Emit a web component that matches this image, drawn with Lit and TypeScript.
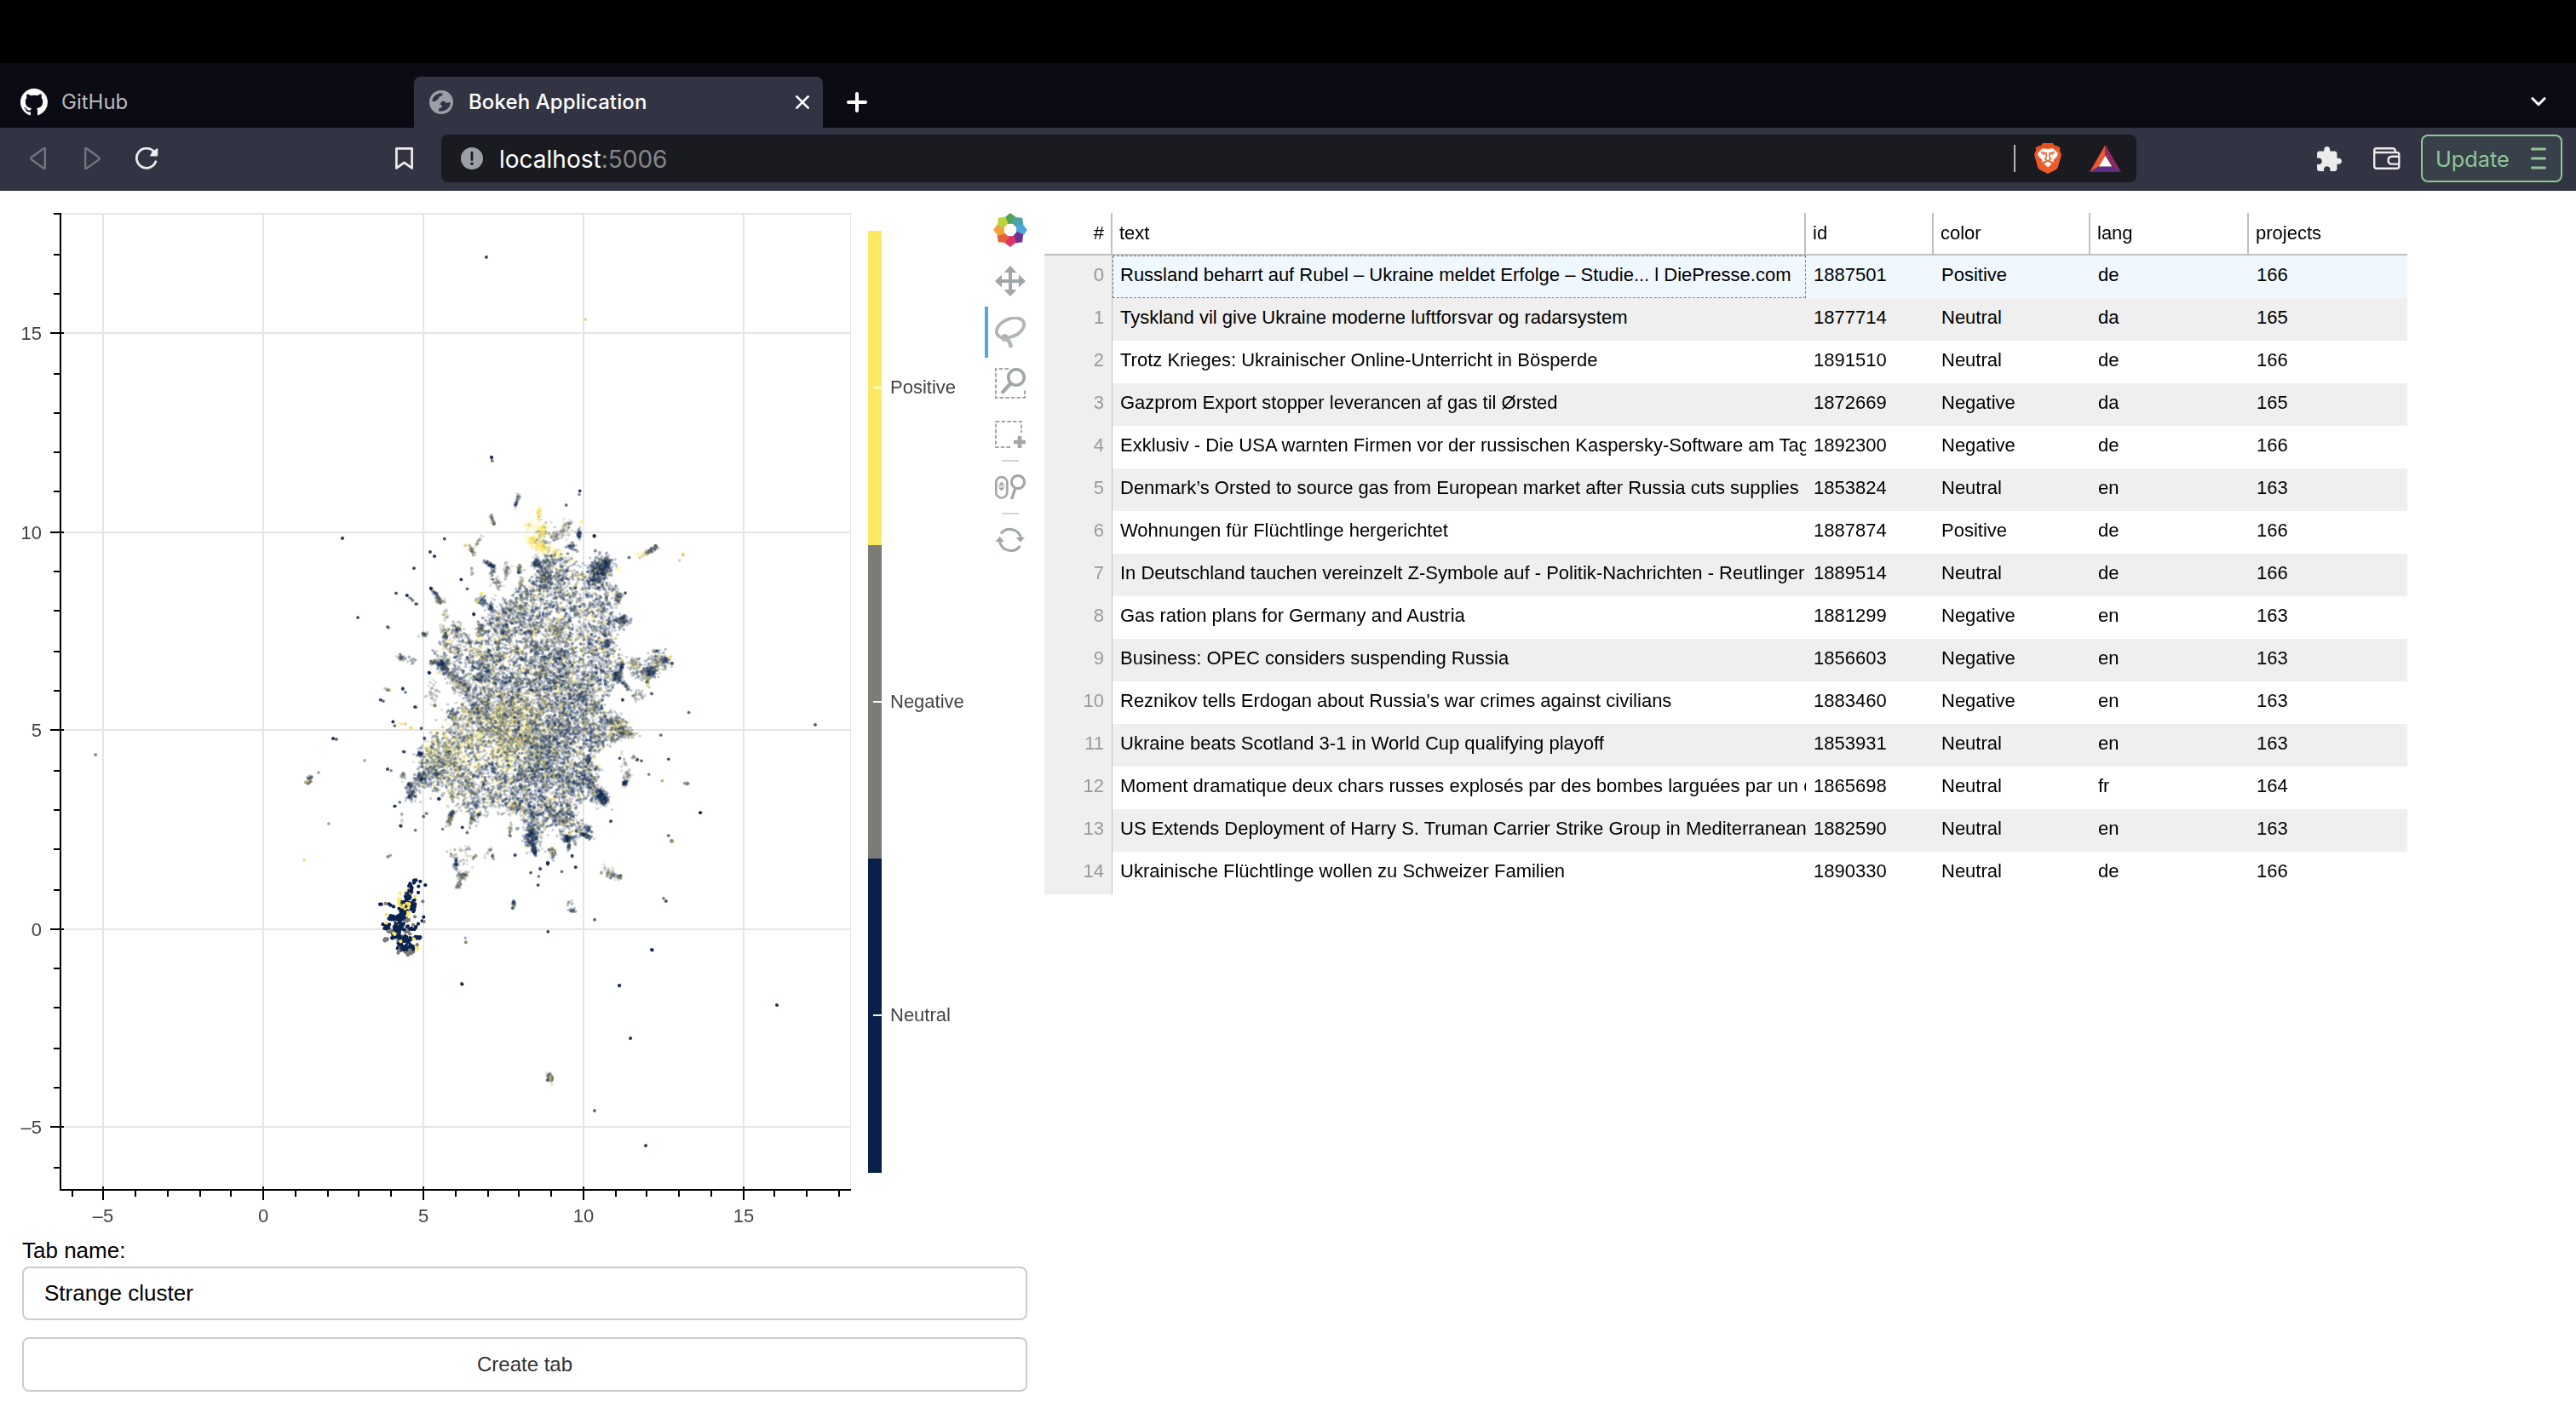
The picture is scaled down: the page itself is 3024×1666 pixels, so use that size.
import { LitElement, html, css, svg } from "lit";
import { customElement } from "lit/decorators.js";

const NAVY = "#0b2350";
const GRAY = "#7c7b78";
const YELLOW = "#fde863";

/* ---------- browser chrome ---------- */

@customElement("browser-chrome")
class BrowserChrome extends LitElement {
  static styles = css`
    :host { display: block; font-family: Inter, "Liberation Sans", sans-serif; }
    .notch { height: 74px; background: #000; }
    .strip { height: 76px; background: #0b0b15; display: flex; align-items: flex-end; }
    .tab { height: 60px; display: flex; align-items: center; box-sizing: border-box; font-size: 24px; line-height: 60px; white-space: nowrap; }
    .idle { width: 486px; padding-left: 24px; gap: 16px; color: #b9b9ba; }
    .active { width: 480px; padding: 0 16px 0 18px; background: #323443; border-radius: 8px 8px 0 0; color: #fff; font-weight: 500; }
    .active .name { margin-left: 18px; flex: 1; letter-spacing: 0.1px; }
    .plus { margin: 0 0 18px 28px; }
    .chev { margin: 0 35px 25px auto; }
    .bar { height: 74px; background: #323443; padding: 8px 16px 10px 35px; box-sizing: border-box; display: flex; align-items: center; }
    .fwd { margin-left: 45px; }
    .reload { margin-left: 41px; }
    .mark { margin-left: 277px; }
    .url { margin-left: 33px; width: 1990px; height: 56px; border-radius: 8px; background: #1a1b20; display: flex; align-items: center; box-sizing: border-box; padding: 0 18px 0 23px; color: #fff; font-size: 28px; white-space: nowrap; }
    .addr { margin-left: 19px; padding-top: 1px; flex: 1; }
    .port { color: #85868a; }
    .rule { width: 2px; height: 32px; background: #b4b4b8; margin-right: 22px; }
    .lion { margin-right: 33px; }
    .ext { margin-left: 212px; }
    .wallet { margin-left: 37px; }
    .update { margin-left: auto; width: 166px; height: 56px; border: 2px solid #8fc795; border-radius: 8px; background: #384049; box-sizing: border-box; display: flex; align-items: center; justify-content: space-between; padding: 0 17px 0 15px; color: #8fc795; font-size: 25.3px; }
    svg { display: block; flex: none; }
  `;
  render() {
    return html`
      <div class="notch"></div>
      <div class="strip">
        <div class="tab idle">
          <svg width="32" height="32" viewBox="0 0 16 16" fill="#fff"><path d="M8 0C3.58 0 0 3.58 0 8c0 3.54 2.29 6.53 5.47 7.59.4.07.55-.17.55-.38 0-.19-.01-.82-.01-1.49-2.01.37-2.53-.49-2.69-.94-.09-.23-.48-.94-.82-1.13-.28-.15-.68-.52-.01-.53.63-.01 1.08.58 1.23.82.72 1.21 1.87.87 2.33.66.07-.52.28-.87.51-1.07-1.78-.2-3.64-.89-3.64-3.95 0-.87.31-1.59.82-2.15-.08-.2-.36-1.02.08-2.12 0 0 .67-.21 2.2.82.64-.18 1.32-.27 2-.27s1.36.09 2 .27c1.53-1.04 2.2-.82 2.2-.82.44 1.1.16 1.92.08 2.12.51.56.82 1.27.82 2.15 0 3.07-1.87 3.75-3.65 3.95.29.25.54.73.54 1.48 0 1.07-.01 1.93-.01 2.2 0 .21.15.46.55.38A8.01 8.01 0 0 0 16 8c0-4.42-3.58-8-8-8z"/></svg>
          <span>GitHub</span>
        </div>
        <div class="tab active">
          <svg width="28" height="28" viewBox="0 0 28 28"><circle cx="14" cy="14" r="14" fill="#9aa0a6"/><path fill="#323443" d="M3.200 12.800C3.600 8 8 3.300 15.500 3.200C15.800 6.200 14.300 7.300 11.800 7.300C10.800 9.500 11.200 10.500 8.800 11C8.300 13 6 13.500 3.200 12.800ZM24.800 14.500C24.500 20.500 19.500 25 11.500 24.700C10.400 21.800 11.300 20.700 14.500 20.200C15.800 18.800 14.500 17 12.300 16.500C13.800 14.500 14.500 12.800 16.300 12.800C18.300 12.600 18.800 13.600 19.300 14.800C21 15.300 23 13.500 24.800 14.500Z"/></svg>
          <span class="name">Bokeh Application</span>
          <svg width="16" height="16" viewBox="0 0 16 16" stroke="#fff" stroke-width="2.700" stroke-linecap="round"><path d="M1.400 1.400L14.600 14.600M14.600 1.400L1.400 14.600"/></svg>
        </div>
        <svg class="plus" width="24" height="24" viewBox="0 0 24 24" stroke="#fff" stroke-width="4" stroke-linecap="round"><path d="M12 2V22M2 12H22"/></svg>
        <svg class="chev" width="18" height="11" viewBox="0 0 18 11" fill="none" stroke="#fff" stroke-width="3" stroke-linecap="round" stroke-linejoin="round"><path d="M2 1.700L9 8.700L16 1.700"/></svg>
      </div>
      <div class="bar">
        <svg width="19" height="26" viewBox="0 0 19 26" fill="none" stroke="#73747f" stroke-width="2.400" stroke-linejoin="round"><path d="M17.800 1.200V24.800H16.500L1.800 14.200Q1 13 1.800 11.800L16.500 1.200Z"/></svg>
        <svg class="fwd" width="19" height="26" viewBox="0 0 19 26" fill="none" stroke="#73747f" stroke-width="2.400" stroke-linejoin="round"><path d="M1.200 1.200V24.800H2.500L17.200 14.200Q18 13 17.200 11.800L2.500 1.200Z"/></svg>
        <svg class="reload" width="28" height="26" viewBox="0 0 28 26"><path d="M23.800 16.800A11.600 11.600 0 1 1 21.500 4.800" fill="none" stroke="#ececec" stroke-width="2.800" stroke-linecap="round"/><path d="M25.800 1.600V8.900Q25.800 10 24.700 10H17.600L20.300 4.800Z" fill="#ececec" stroke="#ececec" stroke-linejoin="round"/></svg>
        <svg class="mark" width="21" height="26" viewBox="0 0 21 26" fill="none" stroke="#ececec" stroke-width="2.700" stroke-linejoin="round"><path d="M1.400 1.400H19.600V24.400L10.500 17.800L1.400 24.400Z"/></svg>
        <div class="url">
          <svg width="26" height="26" viewBox="0 0 26 26"><circle cx="13" cy="13" r="13" fill="#9aa0a6"/><path d="M13 6.200V14.500" stroke="#1a1b20" stroke-width="2.800" stroke-linecap="round"/><circle cx="13" cy="19.200" r="1.700" fill="#1a1b20"/></svg>
          <div class="addr">localhost<span class="port">:5006</span></div>
          <div class="rule"></div>
          <svg class="lion" width="32" height="36" viewBox="0 0 32 36"><path fill="#ec5b28" d="M10.500 0H21.500L24.500 3.400Q27.500 2.600 30.500 6L29.800 8.500L32 13.500L27.800 28.500Q27.200 30.200 25 31.500L16 36L7 31.500Q4.800 30.200 4.200 28.500L0 13.500L2.200 8.500L1.500 6Q4.500 2.600 7.500 3.400Z"/><path fill="#e2521c" d="M10.500 0H21.500L24.500 3.400Q27.500 2.600 30.500 6L29.800 8.500L22 5.500H10L2.200 8.500L1.500 6Q4.500 2.600 7.500 3.400Z"/><path fill="#fff" d="M10 6.300L16 7L22 6.300L28 12L26.800 15.500L22.500 20L23.300 22.500L16 19.800L8.700 22.500L9.500 20L5.200 15.500L4 12ZM16 21.600L20.800 24.200L16 28.600L11.200 24.200Z"/><path fill="none" stroke="#ec5b28" stroke-width="1.500" d="M8 10.500L14.200 11.800V16.200L12.500 18.600L16 20.800L19.500 18.600L17.800 16.200V11.800L24 10.500"/><path fill="#ec5b28" d="M8 12L13 12.600L11.500 14.200ZM24 12L19 12.600L20.500 14.200Z"/></svg>
          <svg width="37" height="32" viewBox="0 0 37 32"><path d="M18.500 0L0 32L10.800 25.500L18.500 12.800Z" fill="#f0562f"/><path d="M18.500 0L37 32L26.200 25.500L18.500 12.800Z" fill="#8f2963"/><path d="M0 32H37L26.200 25.500H10.800Z" fill="#5f2f87"/><path d="M18.500 12.800L26.200 25.500H10.800Z" fill="#fff"/></svg>
        </div>
        <svg class="ext" width="29" height="29" viewBox="2 1 21 21" fill="#ececec"><path d="M20.500 11H19V7c0-1.100-.9-2-2-2h-4V3.500C13 2.120 11.880 1 10.500 1S8 2.120 8 3.500V5H4c-1.100 0-1.990.9-1.990 2v3.800H3.500c1.490 0 2.700 1.210 2.700 2.700s-1.210 2.700-2.700 2.700H2V20c0 1.100.9 2 2 2h3.800v-1.500c0-1.490 1.210-2.700 2.700-2.700 1.490 0 2.700 1.210 2.700 2.700V22H17c1.100 0 2-.9 2-2v-4h1.500c1.380 0 2.500-1.120 2.500-2.500S21.880 11 20.500 11z"/></svg>
        <svg class="wallet" width="32" height="26" viewBox="0 0 32 26" fill="none" stroke="#ececec" stroke-width="2.400" stroke-linejoin="round"><path d="M1.200 3.500V22Q1.200 24.800 4 24.800H27.500Q30.300 24.800 30.300 22V8.500Q30.300 6 27.800 6H3.500Q1.200 6 1.200 3.500Q1.200 1.200 3.500 1.200H23Q25.600 1.200 25.600 3.800V6"/><path d="M30.300 10.800H22Q17.500 11 17.500 15.200T22 19.600H30.300"/></svg>
        <div class="update">
          <span>Update</span>
          <svg width="18" height="26" viewBox="0 0 18 26" stroke="#8fc795" stroke-width="3" stroke-linecap="round"><path d="M1.500 2H16.500M1.500 13H16.500M1.500 24H16.500"/></svg>
        </div>
      </div>`;
  }
}

/* ---------- scatter plot ---------- */

const X0 = 309.35, XU = 37.54, Y0 = 1090.75, YU = 46.62;
const ORIGIN_Y = 224;

function rng(seed: number) {
  return () => {
    seed = (seed + 0x6d2b79f5) | 0;
    let t = Math.imul(seed ^ (seed >>> 15), 1 | seed);
    t = (t + Math.imul(t ^ (t >>> 7), 61 | t)) ^ t;
    return ((t ^ (t >>> 14)) >>> 0) / 4294967296;
  };
}

/* Cloud geometry is kept in its own units: 3 per pixel across, 2.613 per pixel down. */
const cx = (u: number) => 440 + u / 3;
const cy = (v: number) => 560 + v / 2.613;

const OUTLINE = [
  [575, 240], [640, 235], [700, 225], [735, 300], [790, 255], [830, 250], [820, 320], [868, 360], [835, 420], [880, 440],
  [840, 500], [860, 560], [870, 610], [820, 650], [800, 700], [870, 750], [905, 790], [830, 815], [765, 850], [790, 900],
  [770, 940], [815, 1000], [740, 990], [690, 1010], [760, 1095], [690, 1115], [620, 1060], [590, 1100], [565, 1160],
  [535, 1120], [540, 1060], [480, 1020], [440, 1010], [345, 1060], [320, 1010], [250, 975], [190, 960], [125, 985],
  [120, 945], [165, 900], [165, 840], [220, 775], [290, 775], [250, 725], [320, 700], [260, 620], [205, 565], [240, 475],
  [300, 460], [350, 500], [375, 455], [430, 410], [480, 370], [520, 340], [570, 310],
];

/* x, y, spread along, spread across, angle (deg), count, colour mix */
type Blob = [number, number, number, number, number, number, string];
const BLOBS: Blob[] = [
  [795, 282, 22, 20, 0, 380, "n"], [815, 262, 12, 10, 0, 90, "n"], [770, 310, 24, 20, 0, 90, "n"],
  [578, 115, 4, 14, 0, 60, "y"], [540, 150, 8, 10, 0, 25, "y"], [585, 165, 14, 16, 0, 110, "y"], [560, 195, 20, 12, 30, 120, "y"], [590, 215, 16, 12, 0, 100, "y"], [640, 235, 18, 12, 0, 50, "y"], [600, 180, 20, 20, 0, 30, "n"],
  [635, 180, 9, 8, 0, 45, "g"], [680, 145, 8, 10, 0, 35, "g"], [665, 170, 14, 12, 0, 40, "g"], [690, 212, 9, 9, 0, 40, "n"], [720, 175, 5, 8, 0, 50, "n"], [773, 181, 3, 5, 0, 22, "n"],
  [722, 43, 2, 2, 0, 12, "m"], [720, 53, 2, 2, 0, 3, "n"], [674, 86, 2, 2, 0, 8, "g"], [726, 137, 2, 2, 0, 6, "y"], [777, 226, 3, 3, 0, 7, "n"],
  [505, 62, 3, 7, 10, 26, "g"], [497, 85, 3, 9, 12, 20, "n"], [412, 128, 4, 9, -20, 34, "m"], [419, 143, 3, 5, 0, 14, "m"],
  [245, 190, 2, 2, 0, 12, "n"], [195, 230, 2, 2, 0, 10, "n"], [210, 243, 3, 2, 0, 12, "n"], [138, 280, 2, 2, 0, 9, "n"], [304, 315, 2, 2, 0, 12, "n"],
  [342, 225, 12, 4, 55, 50, "m"], [364, 198, 13, 4, -50, 22, "g"], [318, 209, 3, 3, 0, 8, "y"], [405, 268, 14, 4, 25, 60, "n"], [415, 292, 5, 12, 0, 32, "n"], [342, 290, 3, 10, 0, 10, "g"], [326, 343, 2, 2, 0, 6, "n"],
  [198, 342, 4, 4, 0, 16, "n"], [215, 362, 16, 4, 50, 40, "n"], [228, 380, 10, 6, 20, 50, "m"], [75, 356, 2, 2, 0, 10, "n"], [113, 363, 3, 2, 0, 14, "n"], [130, 376, 9, 2, 38, 12, "n"], [146, 390, 4, 2, 0, 10, "n"],
  [432, 325, 12, 16, 0, 45, "g"], [464, 290, 7, 18, 0, 45, "g"], [509, 282, 5, 8, 0, 45, "m"], [515, 320, 5, 16, 0, 30, "g"], [570, 265, 9, 9, 0, 70, "n"], [600, 300, 20, 34, 0, 160, "n"], [640, 320, 50, 40, 0, 180, "m"],
  [378, 380, 12, 9, 0, 60, "n"], [376, 357, 3, 5, 0, 18, "y"], [364, 382, 3, 3, 0, 12, "y"], [410, 402, 6, 14, 0, 45, "n"], [349, 421, 3, 3, 0, 14, "n"],
  [46, 461, 5, 3, 25, 14, "g"], [175, 484, 8, 5, 0, 34, "m"], [248, 480, 9, 14, 0, 65, "m"], [288, 468, 12, 12, 0, 70, "m"], [370, 465, 9, 12, 0, 75, "m"], [250, 425, 10, 14, 0, 22, "g"],
  [92, 555, 8, 5, 10, 45, "m"], [125, 562, 14, 8, 0, 18, "n"], [237, 577, 14, 10, 30, 130, "n"], [202, 568, 6, 4, 0, 20, "n"], [192, 601, 4, 3, 0, 16, "n"], [270, 610, 18, 10, 35, 90, "g"], [310, 640, 20, 12, 30, 80, "g"],
  [45, 652, 6, 3, 10, 16, "m"], [99, 650, 3, 4, 0, 15, "n"], [107, 660, 3, 3, 0, 5, "n"], [20, 684, 3, 2, 0, 12, "n"], [30, 688, 3, 1, 0, 5, "n"], [142, 706, 5, 2, 0, 18, "n"], [211, 701, 3, 3, 0, 20, "m"], [205, 665, 14, 24, 0, 35, "g"],
  [64, 751, 2, 2, 0, 12, "n"], [70, 763, 2, 2, 0, 9, "m"], [95, 758, 12, 3, 0, 14, "y"], [128, 771, 5, 3, 0, 20, "y"], [164, 771, 2, 2, 0, 8, "n"], [175, 802, 3, 4, 0, 9, "n"],
  [158, 850, 6, 5, 0, 50, "n"], [103, 843, 4, 2, 20, 12, "n"], [45, 896, 3, 2, 0, 14, "n"], [57, 901, 3, 1, 0, 4, "n"], [100, 914, 5, 7, 0, 30, "g"], [162, 922, 12, 12, 0, 90, "n"], [125, 943, 7, 6, 0, 40, "n"], [128, 975, 11, 10, -40, 80, "n"], [200, 905, 34, 32, 0, 130, "n"],
  [71, 1010, 3, 2, 0, 14, "n"], [88, 998, 3, 1, 0, 4, "n"], [172, 1042, 3, 3, 0, 14, "g"], [183, 1032, 4, 4, 0, 8, "g"], [91, 1071, 4, 4, 0, 20, "m"], [95, 1048, 2, 10, 0, 7, "g"], [143, 1084, 3, 3, 0, 9, "g"], [225, 987, 5, 3, 0, 20, "n"],
  [268, 1042, 5, 18, 22, 120, "m"], [343, 1048, 5, 12, 15, 60, "m"], [308, 1075, 2, 2, 0, 12, "n"], [325, 1090, 3, 3, 0, 9, "g"], [239, 1080, 2, 2, 0, 7, "g"], [478, 1082, 4, 8, 0, 26, "m"], [477, 1100, 2, 3, 0, 10, "g"],
  [286, 1186, 5, 12, 0, 48, "n"], [308, 1225, 12, 10, 0, 80, "m"], [296, 1250, 5, 9, 20, 36, "m"], [270, 1155, 10, 10, 0, 16, "g"], [315, 1165, 14, 28, 0, 30, "g"], [351, 1166, 9, 3, -35, 20, "g"], [400, 1150, 14, 3, -50, 15, "g"], [416, 1165, 5, 6, 0, 18, "m"],
  [46, 1165, 4, 2, 0, 10, "g"], [56, 1161, 4, 1, 0, 4, "g"],
  [552, 1112, 12, 26, 0, 190, "n"], [562, 1148, 4, 12, -20, 60, "n"], [555, 1070, 16, 34, 0, 80, "n"], [494, 1160, 3, 2, 0, 14, "n"], [626, 1153, 8, 12, 0, 65, "m"], [609, 1185, 3, 5, 0, 32, "n"], [583, 1203, 4, 4, 0, 9, "n"], [549, 1214, 3, 2, 0, 11, "g"], [577, 1226, 2, 2, 0, 4, "n"], [575, 1252, 2, 2, 0, 8, "n"], [659, 1211, 2, 2, 0, 8, "n"],
  [679, 1110, 9, 8, 0, 110, "n"], [684, 1135, 3, 6, 0, 30, "n"], [695, 1163, 2, 4, 0, 14, "n"], [707, 1197, 3, 3, 0, 12, "n"], [742, 1100, 14, 4, 20, 80, "n"], [752, 1080, 6, 6, 0, 25, "n"], [650, 1050, 24, 14, 20, 90, "m"], [831, 1056, 3, 3, 0, 9, "n"],
  [798, 978, 17, 13, 45, 220, "n"], [807, 992, 8, 7, 0, 70, "n"], [740, 935, 30, 20, 20, 90, "n"], [880, 940, 6, 7, 0, 50, "n"], [888, 916, 8, 10, 0, 35, "g"], [875, 880, 12, 22, 0, 16, "g"], [924, 867, 3, 3, 0, 18, "m"], [910, 862, 6, 4, 0, 12, "g"], [939, 871, 2, 2, 0, 8, "n"], [862, 863, 3, 2, 0, 8, "m"], [752, 870, 6, 10, 0, 50, "n"],
  [865, 762, 18, 20, 0, 120, "o"], [888, 787, 20, 6, 8, 100, "o"], [835, 800, 20, 10, 0, 60, "o"],
  [855, 608, 10, 14, 0, 150, "n"], [870, 575, 5, 8, 0, 45, "n"], [882, 640, 16, 4, 40, 40, "n"], [872, 684, 4, 3, 0, 14, "n"], [915, 572, 14, 14, 0, 75, "o"], [970, 597, 16, 12, -20, 130, "n"], [995, 570, 26, 20, -15, 150, "m"], [1020, 560, 8, 6, 0, 50, "n"], [1040, 553, 5, 2, -20, 20, "y"], [1047, 572, 4, 3, 0, 20, "m"], [960, 625, 6, 16, 0, 50, "o"], [975, 665, 5, 2, 0, 11, "o"], [925, 670, 16, 10, 0, 35, "m"], [990, 535, 6, 3, 0, 14, "n"], [940, 600, 26, 16, 0, 60, "n"],
  [873, 440, 9, 9, 0, 95, "n"], [857, 368, 8, 12, 0, 75, "m"], [882, 356, 2, 2, 0, 9, "m"], [820, 510, 8, 7, 0, 55, "n"],
  [972, 226, 18, 5, -28, 80, "m"], [988, 212, 5, 3, -30, 34, "m"], [925, 238, 18, 4, -14, 12, "y"], [895, 248, 5, 2, 0, 5, "n"], [1085, 237, 2, 3, 0, 16, "y"], [1073, 256, 1, 1, 0, 2, "g"], [858, 280, 5, 7, 0, 8, "y"],
  [1106, 723, 2, 2, 0, 8, "m"], [1007, 792, 3, 2, 0, 12, "m"], [1034, 866, 2, 2, 0, 8, "m"], [1012, 931, 2, 2, 0, 8, "o"], [966, 912, 3, 3, 0, 6, "g"], [1098, 940, 7, 2, 5, 18, "m"], [1146, 1030, 3, 2, 0, 16, "n"], [1046, 1117, 5, 4, 20, 28, "m"], [1034, 1100, 2, 4, 0, 5, "n"],
  [830, 1220, 12, 8, 15, 48, "m"], [860, 1227, 6, 4, 0, 38, "m"], [815, 1205, 14, 10, 0, 14, "g"], [798, 1214, 3, 5, 0, 6, "m"], [489, 1308, 3, 6, 0, 28, "n"], [486, 1322, 3, 3, 0, 16, "g"], [697, 1330, 7, 3, 18, 26, "n"], [685, 1310, 9, 6, 0, 9, "n"], [774, 1358, 2, 2, 0, 7, "m"], [610, 1395, 2, 2, 0, 9, "n"], [1025, 1301, 4, 3, 10, 20, "m"], [1017, 1292, 2, 2, 0, 5, "n"], [320, 1427, 3, 3, 0, 12, "o"], [319, 1414, 2, 2, 0, 2, "g"], [976, 1451, 4, 3, 20, 22, "n"], [308, 1556, 2, 2, 0, 12, "n"], [861, 1560, 2, 2, 0, 12, "n"],
  [365, 715, 18, 18, 0, 70, "n"], [275, 725, 18, 18, 0, 50, "n"], [375, 555, 10, 18, 0, 40, "m"], [436, 550, 8, 14, 0, 40, "m"], [400, 600, 14, 20, 0, 50, "n"], [460, 475, 12, 18, 0, 60, "m"], [475, 415, 50, 26, -15, 130, "n"], [540, 440, 50, 30, 0, 130, "n"],
  [645, 470, 18, 16, 0, 80, "m"], [655, 545, 16, 14, 0, 60, "n"], [720, 670, 34, 30, 0, 140, "n"], [640, 620, 70, 60, 0, 260, "n"], [590, 840, 60, 50, 0, 380, "n"], [650, 760, 50, 40, 0, 200, "n"], [560, 905, 50, 34, 0, 170, "n"], [760, 715, 14, 12, 0, 50, "o"],
  [490, 730, 70, 45, 0, 420, "o"], [500, 800, 70, 45, 0, 340, "o"], [390, 755, 50, 30, 0, 150, "o"], [275, 830, 50, 46, 0, 300, "o"], [215, 880, 30, 28, 0, 120, "o"], [485, 1010, 11, 14, 0, 70, "o"], [300, 950, 60, 46, 0, 130, "o"], [400, 700, 50, 35, 0, 150, "g"], [690, 930, 40, 30, 0, 130, "n"], [560, 1000, 50, 30, 0, 100, "n"],
];

/* Isolated documents, in page pixels. */
const LONERS: [number, number, string, number][] = [
  [571, 302, "m", 12], [577, 537, "n", 20], [578, 541, "m", 12], [687, 375, "y", 8], [402, 632, "n", 24], [112, 886, "m", 10], [957, 851, "m", 9], [391, 867, "n", 16], [395, 868, "n", 10],
  [386, 967, "g", 5], [357, 1010, "y", 6], [912, 1180, "n", 12], [727, 1157, "n", 12], [740, 1219, "n", 16], [542, 1155, "n", 12],
  [698, 1304, "n", 12], [758, 1345, "n", 12], [420, 725, "m", 10], [428, 893, "g", 5], [361, 918, "o", 30], [363, 914, "m", 26], [366, 912, "g", 6], [374, 907, "g", 5],
  [645, 1263, "m", 36], [647, 1267, "o", 30], [643, 1268, "g", 16],
];

/* Cumulative share of navy, then of navy + gray; the rest is yellow. */
const SHARES: Record<string, [number, number]> = {
  n: [0.84, 0.94], m: [0.52, 0.78], g: [0.25, 0.93], y: [0.02, 0.08], o: [0.42, 0.58], body: [0.62, 0.8],
};

function inside(x: number, y: number) {
  let hit = false;
  for (let i = 0, j = OUTLINE.length - 1; i < OUTLINE.length; j = i++) {
    const [xi, yi] = OUTLINE[i], [xj, yj] = OUTLINE[j];
    if (yi > y !== yj > y && x < ((xj - xi) * (y - yi)) / (yj - yi) + xi) hit = !hit;
  }
  return hit;
}

function drawScatter(ctx: CanvasRenderingContext2D) {
  const r = rng(7);
  const gauss = () => Math.sqrt(-2 * Math.log(r() + 1e-9)) * Math.cos(6.28318 * r());
  const tint = (mix: string) => {
    const [a, b] = SHARES[mix], k = r();
    return k < a ? NAVY : k < b ? GRAY : YELLOW;
  };
  const shuffle = (list: unknown[]) => {
    for (let i = list.length - 1; i > 0; i--) {
      const j = Math.floor(r() * (i + 1));
      [list[i], list[j]] = [list[j], list[i]];
    }
  };
  const pts: [number, number, string][] = [];
  let placed = 0;
  while (placed < 14500) {
    const u = 100 + r() * 840, v = 200 + r() * 980;
    if (!inside(u, v)) continue;
    const d = Math.hypot((u - 560) / 400, (v - 720) / 480);
    if (r() > 1.15 - d * 0.5) continue;
    const n = r() < 0.35 ? 4 : 1;
    const mix = v > 690 && v < 900 && u < 560 + 60 * gauss() ? "o" : "body";
    const color = tint(mix);
    const ju = u + gauss() * 10, jv = v + gauss() * 10;
    for (let i = 0; i < n; i++) {
      pts.push([cx(ju + (i ? gauss() * 4 : 0)), cy(jv + (i ? gauss() * 4 : 0)), r() < 0.6 ? color : tint(mix)]);
      placed++;
    }
  }
  for (const [x, y, sx, sy, deg, n, mix] of BLOBS) {
    const c = Math.cos((deg * Math.PI) / 180), s = Math.sin((deg * Math.PI) / 180);
    const tight = sx <= 5 && sy <= 5 ? 0.35 : 0.8;
    for (let i = 0; i < n; i++) {
      const a = gauss() * sx * tight, b = gauss() * sy * tight;
      pts.push([cx(x + a * c - b * s), cy(y + a * s + b * c), tint(mix)]);
    }
  }
  shuffle(pts);
  for (const [x, y, mix, n] of LONERS)
    for (let i = 0; i < n; i++) pts.push([x + gauss() * (n > 24 ? 1.6 : 0.3), y + gauss() * (n > 24 ? 2 : 0.3), tint(mix)]);

  ctx.globalAlpha = 0.22;
  for (const [x, y, color] of pts) {
    ctx.fillStyle = color;
    ctx.beginPath();
    ctx.arc(x, y, 1.7, 0, 6.2832);
    ctx.fill();
  }

  /* The lassoed cluster is drawn at full strength. */
  ctx.globalAlpha = 1;
  const picked: [number, number, number, number, number, string][] = [
    [140, 1240, 6, 4, 6, "n"], [126, 1262, 6, 9, 16, "n"], [114, 1288, 8, 10, 18, "n"], [110, 1310, 14, 10, 16, "n"], [132, 1312, 8, 12, 12, "n"],
    [100, 1336, 10, 8, 22, "n"], [80, 1355, 14, 7, 34, "n"], [60, 1352, 12, 5, 20, "n"], [42, 1382, 8, 6, 16, "n"], [85, 1380, 12, 12, 60, "n"],
    [75, 1405, 12, 7, 30, "n"], [105, 1420, 16, 8, 34, "n"], [95, 1442, 10, 8, 24, "n"], [130, 1445, 14, 10, 18, "n"], [150, 1412, 8, 4, 9, "n"], [130, 1385, 10, 5, 9, "n"],
    [118, 1275, 4, 5, 6, "y"], [86, 1298, 3, 8, 10, "y"], [108, 1316, 9, 10, 16, "y"], [116, 1338, 4, 5, 4, "y"], [84, 1370, 5, 6, 8, "y"], [148, 1444, 4, 6, 6, "y"], [70, 1400, 16, 18, 4, "y"],
    [112, 1360, 8, 5, 9, "g"], [50, 1394, 5, 4, 6, "g"], [115, 1392, 8, 5, 8, "g"], [38, 1421, 4, 3, 5, "g"], [100, 1412, 12, 8, 12, "g"], [122, 1456, 12, 7, 20, "g"], [92, 1446, 8, 8, 8, "g"],
  ];
  const dots: [number, number, string][] = [];
  for (const [u, v, su, sv, n, mix] of picked) for (let i = 0; i < n; i++) dots.push([u + gauss() * su * 0.7, v + gauss() * sv * 0.75, mix]);
  shuffle(dots);
  dots.push(
    [145, 1237, "n"], [160, 1241, "n"], [178, 1252, "n"], [154, 1256, "n"], [153, 1275, "n"], [142, 1287, "y"], [169, 1302, "g"], [140, 1298, "n"],
    [18, 1311, "n"], [23, 1311, "n"], [38, 1309, "g"], [50, 1310, "n"], [56, 1314, "n"], [66, 1318, "n"], [137, 1315, "n"], [136, 1333, "n"], [141, 1349, "g"],
    [172, 1350, "n"], [167, 1362, "n"], [173, 1364, "g"], [153, 1371, "n"], [145, 1379, "n"], [135, 1374, "g"], [41, 1343, "y"], [40, 1368, "y"], [34, 1385, "n"],
    [42, 1420, "g"], [36, 1423, "g"], [160, 1412, "n"], [137, 1417, "y"], [70, 1403, "y"], [91, 1425, "y"], [149, 1435, "g"], [148, 1448, "y"],
  );
  for (const [u, v, mix] of dots) {
    ctx.fillStyle = mix === "y" ? YELLOW : mix === "g" ? GRAY : NAVY;
    ctx.beginPath();
    ctx.arc(cx(u), cy(v), 2.1, 0, 6.2832);
    ctx.fill();
  }
}

@customElement("cluster-plot")
class ClusterPlot extends LitElement {
  static styles = css`
    :host { display: grid; width: 1140px; height: 1223px; }
    canvas, svg { grid-area: 1 / 1; display: block; }
    .label { font: 22px "Liberation Sans", Helvetica, sans-serif; fill: #444; }
    .grid { stroke: #e5e5e5; stroke-width: 2; }
    .axis { stroke: #000; stroke-width: 2; }
    .tick { stroke: #fff; stroke-width: 2; }
  `;
  firstUpdated() {
    const ctx = (this.renderRoot.querySelector("canvas") as HTMLCanvasElement).getContext("2d")!;
    ctx.translate(0, -ORIGIN_Y);
    drawScatter(ctx);
  }
  render() {
    /* Lines are two pixels wide and sit on odd centres. */
    const snap = (p: number) => Math.floor(p / 2) * 2 + 1;
    const px = (v: number) => snap(X0 + v * XU);
    const py = (v: number) => snap(Y0 - v * YU);
    const xs = Array.from({ length: 25 }, (_, i) => i - 6);
    const ys = Array.from({ length: 25 }, (_, i) => i - 6);
    const major = (v: number) => v % 5 === 0;
    const text = (v: number) => String(v).replace("-", "–");
    const bands: [number, number, string, string][] = [[271, 369, YELLOW, "Positive"], [640, 368, GRAY, "Negative"], [1008, 369, "#08204a", "Neutral"]];
    return html`
      <svg width="1140" height="1223" viewBox="0 224 1140 1223">
        ${xs.filter(major).map((v) => svg`<path class="grid" d="M${px(v)} 251V1396"/>`)}
        ${ys.filter(major).map((v) => svg`<path class="grid" d="M72 ${py(v)}H999"/>`)}
        <path class="grid" d="M72 251H999"/>
        <path d="M998.500 251V1396" stroke="#e5e5e5"/>
      </svg>
      <canvas width="1140" height="1223"></canvas>
      <svg width="1140" height="1223" viewBox="0 224 1140 1223">
        <path class="axis" d="M71 250V1397M70 1397H999"/>
        ${ys.map((v) => svg`<path class="axis" d="${major(v) ? `M59 ${py(v)}H75` : `M63 ${py(v)}H71`}"/>`)}
        ${xs.map((v) => svg`<path class="axis" d="${major(v) ? `M${px(v)} 1393V1409` : `M${px(v)} 1397V1405`}"/>`)}
        ${ys.filter(major).map((v) => svg`<text class="label" x="49" y="${py(v) + 8}" text-anchor="end">${text(v)}</text>`)}
        ${xs.filter(major).map((v) => svg`<text class="label" x="${px(v)}" y="1435" text-anchor="middle">${text(v)}</text>`)}
        ${bands.map(([y, h, color, name]) => svg`
          <rect x="1019" y="${y}" width="16" height="${h}" fill="${color}"/>
          <path class="tick" d="M1025 ${y + 184}H1035"/>
          <text class="label" x="1045" y="${y + 191}">${name}</text>`)}
      </svg>`;
  }
}

/* ---------- plot tools ---------- */

@customElement("plot-tools")
class PlotTools extends LitElement {
  static styles = css`
    :host { display: flex; flex-direction: column; align-items: center; width: 60px; padding-top: 26px; }
    .logo { height: 50px; }
    .tool { width: 60px; height: 60px; display: flex; align-items: center; justify-content: center; }
    .on { box-shadow: inset 4px 0 #54a8de; }
    .sep { width: 20px; height: 2px; background: #d3d3d3; }
    svg { display: block; }
  `;
  render() {
    const g = "#a1a6a9";
    const petals = ["#4fa65a", "#4aa5ab", "#4fa5de", "#6f3390", "#e0336b", "#e2643a", "#f2a33a", "#bdd23c"];
    return html`
      <div class="logo"><svg width="40" height="40" viewBox="-20 -20 40 40">
        ${petals.map((c, i) => svg`<path transform="rotate(${i * 45})" fill="${c}" d="M0 -20L6.800 -15L3.600 -7.200L-4.500 -7L-6.800 -14.500Z"/>`)}
      </svg></div>
      <div class="tool"><svg width="36" height="36" viewBox="0 0 36 36" fill="${g}"><path d="M18 0L25.500 8H20V16H28V10.500L36 18L28 25.500V20H20V28H25.500L18 36L10.500 28H16V20H8V25.500L0 18L8 10.500V16H16V8H10.500Z"/></svg></div>
      <div class="tool on"><svg width="36" height="36" viewBox="0 0 36 36" fill="none" stroke="#b0b5b9"><ellipse cx="18" cy="13" rx="17" ry="10.500" transform="rotate(-24 18 13)" stroke-width="3.800"/><path d="M12 25Q18.500 28 18.500 36" stroke-width="4.600"/><circle cx="11.500" cy="24.500" r="4" fill="#b0b5b9" stroke-width="1"/></svg></div>
      <div class="tool"><svg width="36" height="36" viewBox="0 0 36 36" fill="none" stroke="${g}"><path d="M16 1H1V35H35V24" stroke-width="2" stroke-dasharray="4.500 2.200"/><circle cx="25" cy="11" r="9.300" stroke-width="3.600"/><path d="M18.500 18L8 29.500" stroke-width="4.200"/></svg></div>
      <div class="tool"><svg width="36" height="32" viewBox="0 0 36 32" fill="none" stroke="${g}"><path d="M18 31H1V1H31V14" stroke-width="2" stroke-dasharray="4.500 2.200"/><path d="M29 18V32M22 25H36" stroke-width="4.600"/></svg></div>
      <div class="sep"></div>
      <div class="tool"><svg width="36" height="30" viewBox="0 0 36 30" fill="none" stroke="${g}"><rect x="1.300" y="3" width="13" height="24.500" rx="6.500" stroke-width="2.600"/><path d="M7.800 8.500L11.500 12.500H4ZM7.800 19.500L11.500 15.500H4Z" fill="${g}" stroke="none"/><path d="M4.200 14H11.400" stroke-width="1"/><circle cx="27" cy="9" r="7.600" stroke-width="3"/><path d="M24 16L19.500 29" stroke-width="3.400"/></svg></div>
      <div class="sep"></div>
      <div class="tool"><svg width="36" height="30" viewBox="0 0 36 30" fill="none" stroke="${g}" stroke-width="3"><path d="M7 7.500A13.400 13.400 0 0 1 30.500 12.500"/><path d="M29.500 22A13.400 13.400 0 0 1 5.500 16.500"/><path d="M24.500 12H35L30 17.500ZM0.500 17H11L5.500 11Z" fill="${g}" stroke="none"/></svg></div>`;
  }
}

/* ---------- data table ---------- */

const ROWS: [string, string, string, string, string][] = [
  ["Russland beharrt auf Rubel – Ukraine meldet Erfolge – Studie... l DiePresse.com", "1887501", "Positive", "de", "166"],
  ["Tyskland vil give Ukraine moderne luftforsvar og radarsystem", "1877714", "Neutral", "da", "165"],
  ["Trotz Krieges: Ukrainischer Online-Unterricht in Bösperde", "1891510", "Neutral", "de", "166"],
  ["Gazprom Export stopper leverancen af gas til Ørsted", "1872669", "Negative", "da", "165"],
  ["Exklusiv - Die USA warnten Firmen vor der russischen Kaspersky-Software am Tag", "1892300", "Negative", "de", "166"],
  ["Denmark’s Orsted to source gas from European market after Russia cuts supplies", "1853824", "Neutral", "en", "163"],
  ["Wohnungen für Flüchtlinge hergerichtet", "1887874", "Positive", "de", "166"],
  ["In Deutschland tauchen vereinzelt Z-Symbole auf - Politik-Nachrichten - Reutlinger", "1889514", "Neutral", "de", "166"],
  ["Gas ration plans for Germany and Austria", "1881299", "Negative", "en", "163"],
  ["Business: OPEC considers suspending Russia", "1856603", "Negative", "en", "163"],
  ["Reznikov tells Erdogan about Russia's war crimes against civilians", "1883460", "Negative", "en", "163"],
  ["Ukraine beats Scotland 3-1 in World Cup qualifying playoff", "1853931", "Neutral", "en", "163"],
  ["Moment dramatique deux chars russes explosés par des bombes larguées par un d", "1865698", "Neutral", "fr", "164"],
  ["US Extends Deployment of Harry S. Truman Carrier Strike Group in Mediterranean", "1882590", "Neutral", "en", "163"],
  ["Ukrainische Flüchtlinge wollen zu Schweizer Familien", "1890330", "Neutral", "de", "166"],
];

@customElement("article-table")
class ArticleTable extends LitElement {
  static styles = css`
    :host { display: block; width: 1600px; padding-top: 26px; font: 22px "Liberation Sans", Helvetica, Arial, sans-serif; color: #000; }
    .row { display: grid; grid-template-columns: 80px 814px 150px 184px 186px 186px; height: 50px; }
    .head { box-sizing: border-box; border-bottom: 2px solid #c0c0c0; }
    .head > div { border-right: 2px solid #c0c0c0; line-height: 47px; padding: 0 8px; }
    .head > div:last-child { border-right: 0; }
    .row > div { box-sizing: border-box; overflow: hidden; white-space: nowrap; }
    .body > div { line-height: 45px; padding-left: 9px; }
    .body > .idx { background: #efefef; color: #9a9a9a; border-right: 1px solid #c0c0c0; padding: 0 9px 0 0; }
    .idx { text-align: right; }
    .odd { background: #efefef; }
    .sel { background: #f0f8ff; }
    .sel > .text { border: 1px dashed #808080; padding-left: 8px; line-height: 43px; }
  `;
  render() {
    return html`
      <div class="row head"><div class="idx">#</div><div>text</div><div>id</div><div>color</div><div>lang</div><div>projects</div></div>
      ${ROWS.map((row, i) => html`
        <div class="row body ${i === 0 ? "sel" : i % 2 ? "odd" : ""}">
          <div class="idx">${i}</div>
          ${row.map((cell, c) => html`<div class="${c === 0 ? "text" : "cell"}">${cell}</div>`)}
        </div>`)}`;
  }
}

@customElement("app-root")
class AppRoot extends LitElement {
  static styles = css`
    :host { display: block; width: 3024px; height: 1666px; overflow: hidden; background: #fff; font-family: "Liberation Sans", Helvetica, Arial, sans-serif; }
    .page { display: flex; gap: 10px; }
    .left { width: 1216px; }
    .figure { display: flex; gap: 16px; }
    .form { padding: 0 10px 0 26px; display: flex; flex-direction: column; }
    .caption { height: 40px; line-height: 42px; font-size: 26px; color: #000; }
    .field { height: 63px; box-sizing: border-box; border: 2px solid #ccc; border-radius: 8px; padding: 0 24px; font: 26px "Liberation Sans", Helvetica, sans-serif; color: #000; background: #fff; }
    .create { margin-top: 20px; height: 64px; box-sizing: border-box; border: 2px solid #ccc; border-radius: 8px; background: #fff; font: 24px "Liberation Sans", Helvetica, sans-serif; color: #333; }
  `;
  render() {
    return html`
      <browser-chrome></browser-chrome>
      <div class="page">
        <div class="left">
          <div class="figure"><cluster-plot></cluster-plot><plot-tools></plot-tools></div>
          <div class="form">
            <label class="caption" for="name">Tab name:</label>
            <input class="field" id="name" .value=${"Strange cluster"} />
            <button class="create">Create tab</button>
          </div>
        </div>
        <article-table></article-table>
      </div>`;
  }
}
